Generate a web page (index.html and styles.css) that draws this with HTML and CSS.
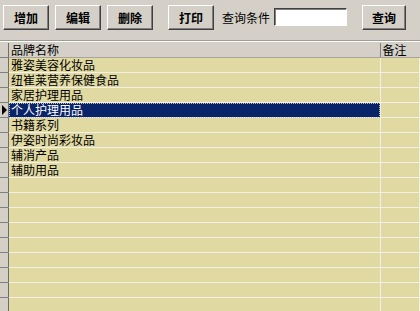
FILE: index.html
```html
<!DOCTYPE html>
<html lang="zh-CN">
<head>
    <meta charset="UTF-8">
    <title>品牌维护</title>
    <link rel="stylesheet" href="styles.css">
</head>
<body>
    <div class="toolbar">
        <button class="btn btn-add">增加</button>
        <button class="btn btn-edit">编辑</button>
        <button class="btn btn-del">删除</button>
        <button class="btn btn-print">打印</button>
        <span class="query-label">查询条件</span>
        <input type="text" class="query-input">
        <button class="btn btn-query">查询</button>
    </div>

    <table class="grid">
        <thead>
            <tr>
                <th class="ind"></th>
                <th class="col-name">品牌名称</th>
                <th class="col-note">备注</th>
            </tr>
        </thead>
        <tbody>
            <tr><td class="ind"></td><td>雅姿美容化妆品</td><td></td></tr>
            <tr><td class="ind"></td><td>纽崔莱营养保健食品</td><td></td></tr>
            <tr><td class="ind"></td><td>家居护理用品</td><td></td></tr>
            <tr class="current"><td class="ind"><span class="arrow"></span></td><td class="selected">个人护理用品</td><td></td></tr>
            <tr><td class="ind"></td><td>书籍系列</td><td></td></tr>
            <tr><td class="ind"></td><td>伊姿时尚彩妆品</td><td></td></tr>
            <tr><td class="ind"></td><td>辅消产品</td><td></td></tr>
            <tr><td class="ind"></td><td>辅助用品</td><td></td></tr>
            <tr><td class="ind"></td><td></td><td></td></tr>
            <tr><td class="ind"></td><td></td><td></td></tr>
            <tr><td class="ind"></td><td></td><td></td></tr>
            <tr><td class="ind"></td><td></td><td></td></tr>
            <tr><td class="ind"></td><td></td><td></td></tr>
            <tr><td class="ind"></td><td></td><td></td></tr>
            <tr><td class="ind"></td><td></td><td></td></tr>
            <tr><td class="ind"></td><td></td><td></td></tr>
            <tr><td class="ind"></td><td></td><td></td></tr>
        </tbody>
    </table>
</body>
</html>
```

FILE: styles.css
```css
body {
    margin: 0;
    background-color: #d4d0c8;
    font-family: "Noto Sans CJK SC", "Liberation Sans", sans-serif;
    font-size: 12px;
    color: #000;
    overflow: hidden;
}
.toolbar {
    display: flex;
    align-items: center;
    height: 40px;
    padding-left: 3px;
    border-bottom: 1px solid #a09c94;
    box-shadow: 0 1px 0 #ffffff;
}
.btn {
    width: 46px;
    height: 25px;
    padding: 0;
    margin-top: -5px;
    font-family: inherit;
    font-size: 12px;
    font-weight: bold;
    color: #000;
    background-color: #d4d0c8;
    border: 1px solid;
    border-color: #ffffff #404040 #404040 #ffffff;
    box-shadow: inset -1px -1px 0 #808080;
}
.btn-edit {
    margin-left: 6px;
}
.btn-del {
    margin-left: 6px;
}
.btn-print {
    margin-left: 15px;
}
.query-label {
    margin-left: 8px;
    margin-top: -5px;
}
.query-input {
    width: 73px;
    height: 18px;
    box-sizing: border-box;
    margin-left: 4px;
    margin-top: -7px;
    padding: 1px;
    background: #fff;
    border: 1px solid;
    border-color: #404040 #ffffff #ffffff #404040;
    box-shadow: inset 1px 1px 0 #808080;
}
.btn-query {
    margin-left: 15px;
    width: 44px;
}
.grid {
    margin-top: 2px;
    width: 100%;
    border-collapse: collapse;
    table-layout: fixed;
}
.grid th,
.grid td {
    height: 14px;
    padding: 0 0 0 2px;
    line-height: 14px;
    text-align: left;
    font-weight: normal;
    white-space: nowrap;
    border-bottom: 1px solid #f2efe6;
    border-right: 1px solid #f2efe6;
    background-color: #e0d9a2;
}
.grid td {
    overflow: hidden;
}
.grid th {
    background-color: #d4d0c8;
    border-bottom: 1px solid #a8a49c;
    border-right: 1px solid #808080;
}
.grid .ind {
    width: 8px;
    padding: 0;
    background-color: #d4d0c8;
    border-right: 1px solid #6c6c6c;
    border-bottom: 1px solid #808080;
}
.grid .col-note {
    width: 37px;
}
.grid th.col-note {
    border-right: none;
}
.grid td.selected {
    background-color: #0a246a;
    color: #fff;
    outline: 1px dotted #c0c0c0;
    outline-offset: -1px;
}
.arrow {
    display: block;
    width: 0;
    height: 0;
    margin-left: 2px;
    border-top: 5px solid transparent;
    border-bottom: 5px solid transparent;
    border-left: 5px solid #000;
}
```
